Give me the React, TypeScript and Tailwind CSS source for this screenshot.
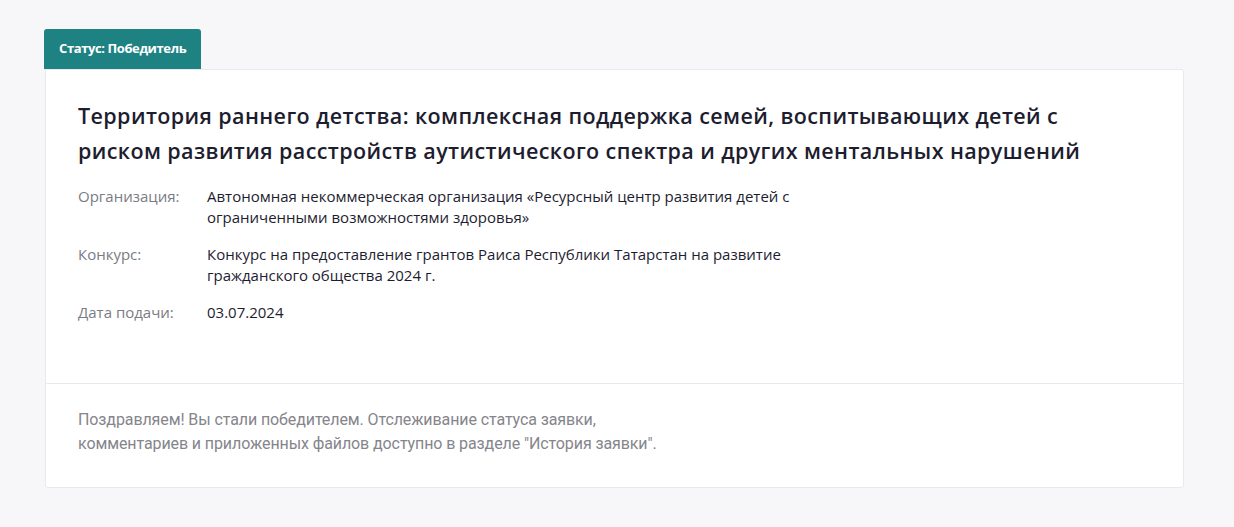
import React from "react";

const rows = [
  {
    label: "Организация:",
    value:
      "Автономная некоммерческая организация «Ресурсный центр развития детей с ограниченными возможностями здоровья»",
  },
  {
    label: "Конкурс:",
    value:
      "Конкурс на предоставление грантов Раиса Республики Татарстан на развитие гражданского общества 2024 г.",
  },
  { label: "Дата подачи:", value: "03.07.2024" },
];

const App: React.FC = () => {
  return (
    <div
      className="min-h-screen bg-[#f7f7fa] pt-[29px] pl-[44px] pr-[50px] pb-10"
      style={{ fontFamily: "'Open Sans', Inter, sans-serif" }}
    >
      <div className="inline-flex h-[40px] items-center rounded-t-[3px] bg-[#1e8283] px-[15px] text-[13px] font-bold tracking-[-0.4px] text-white">
        Статус: Победитель
      </div>

      <div className="ml-px rounded-b-[3px] rounded-tr-[3px] border border-[#e8e8ee] bg-white">
        <div className="px-[32px] pt-[28px] pb-[60px]">
          <h1 className="text-[21.5px] font-semibold leading-[35px] tracking-[0.4px] text-[#1d1d2f]">
            Территория раннего детства: комплексная поддержка семей, воспитывающих детей с
            <br />
            риском развития расстройств аутистического спектра и других ментальных нарушений
          </h1>

          <div className="mt-[18px] flex flex-col gap-[16px]">
            {rows.map((r) => (
              <div key={r.label} className="flex text-[15px] leading-[21px]">
                <div className="w-[129px] shrink-0 text-[#7b7b83]">{r.label}</div>
                <div className="max-w-[640px] text-[#1d1d2f]">{r.value}</div>
              </div>
            ))}
          </div>
        </div>

        <div
          className="border-t border-[#e8e8ee] px-[32px] pt-[24px] pb-[31px] text-[16px] leading-[24px] tracking-[-0.1px] text-[#85858c]"
          style={{ fontFamily: "Roboto, sans-serif" }}
        >
          Поздравляем! Вы стали победителем. Отслеживание статуса заявки,
          <br />
          комментариев и приложенных файлов доступно в разделе "История заявки".
        </div>
      </div>
    </div>
  );
};

export default App;
